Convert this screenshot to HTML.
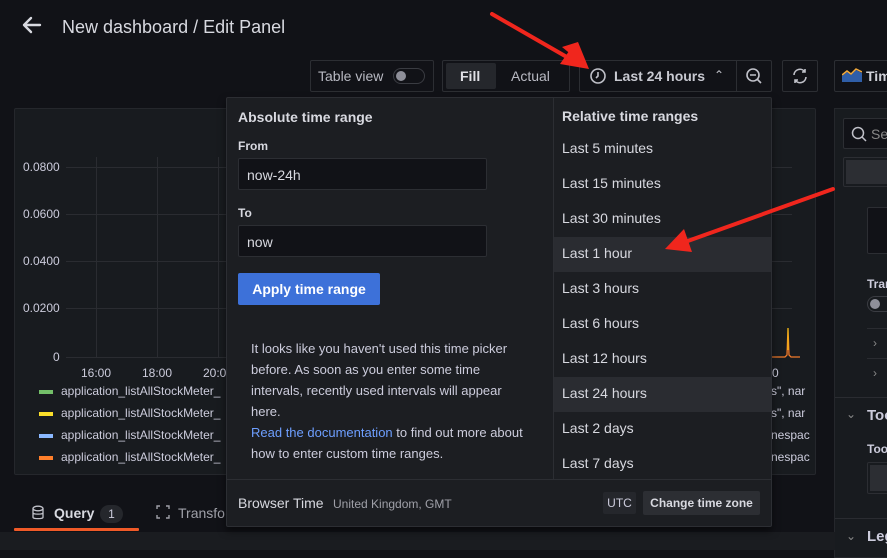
<!DOCTYPE html>
<html><head><style>
*{box-sizing:border-box;margin:0;padding:0}
body{width:887px;height:550px;overflow:hidden;background:#111217;font-family:"Liberation Sans",sans-serif;color:#ccccdc;position:relative}
.a{position:absolute}
.box{position:absolute;border:1px solid #2c2e33;border-radius:2px}
.t{position:absolute;white-space:nowrap}
</style></head><body>
<svg class="a" style="left:22px;top:16px" width="20" height="18" viewBox="0 0 20 18"><path d="M9 2 L2 9 L9 16 M2 9 H18" stroke="#d8d9e0" stroke-width="2.4" fill="none" stroke-linecap="round" stroke-linejoin="round"/></svg>
<div class="t" style="left:62px;top:17px;font-size:18px;color:#d8d9e0">New dashboard / Edit Panel</div>

<div class="box" style="left:310px;top:60px;width:124px;height:32px"></div>
<div class="t" style="left:318px;top:68px;font-size:14px;color:#b8b9c2">Table view</div>
<div class="a" style="left:393px;top:68px;width:32px;height:16px;border:1px solid #3a3c42;border-radius:8px"></div>
<div class="a" style="left:396px;top:71px;width:10px;height:10px;border-radius:50%;background:#8e8f99"></div>

<div class="box" style="left:442px;top:60px;width:128px;height:32px"></div>
<div class="a" style="left:446px;top:63px;width:50px;height:26px;background:#25272c;border-radius:2px"></div>
<div class="t" style="left:460px;top:68px;font-size:14px;font-weight:bold;color:#e0e0e6">Fill</div>
<div class="t" style="left:511px;top:68px;font-size:14px;color:#b8b9c2">Actual</div>

<div class="box" style="left:579px;top:60px;width:193px;height:32px"></div>
<div class="a" style="left:736px;top:61px;width:1px;height:30px;background:#2c2e33"></div>
<svg class="a" style="left:589px;top:67px" width="18" height="18" viewBox="0 0 18 18"><circle cx="9" cy="9" r="7" stroke="#c0c1c9" stroke-width="1.6" fill="none"/><path d="M9 5V9L7 11" stroke="#c0c1c9" stroke-width="1.6" fill="none"/></svg>
<div class="t" style="left:614px;top:68px;font-size:14px;font-weight:bold;color:#c8c9d1">Last 24 hours</div>
<div class="t" style="left:714px;top:68px;font-size:12px;color:#c0c1c9">&#8963;</div>
<svg class="a" style="left:745px;top:67px" width="18" height="18" viewBox="0 0 18 18"><circle cx="8" cy="8" r="6" stroke="#c0c1c9" stroke-width="1.6" fill="none"/><path d="M5 8H11M12.5 12.5L16 16" stroke="#c0c1c9" stroke-width="1.6"/></svg>
<div class="box" style="left:782px;top:60px;width:36px;height:32px"></div>
<svg class="a" style="left:791px;top:67px" width="18" height="18" viewBox="0 0 18 18"><path d="M3 8A6 6 0 0 1 14 5M15 10A6 6 0 0 1 4 13M14 2V5H11M4 16V13H7" stroke="#c0c1c9" stroke-width="1.6" fill="none"/></svg>
<div class="box" style="left:834px;top:60px;width:60px;height:32px"></div>
<svg class="a" style="left:842px;top:68px" width="20" height="14" viewBox="0 0 20 14"><path d="M0 14V8L5 4L9 7L14 2L20 5V14Z" fill="#2f5ea8"/><path d="M0 7L5 3L9 6L14 1L20 4" stroke="#f2a93b" stroke-width="1.5" fill="none"/></svg>
<div class="t" style="left:866px;top:68px;font-size:14px;font-weight:bold;color:#d0d1d8">Tim</div>

<!-- graph panel -->
<div class="a" style="left:14px;top:108px;width:802px;height:367px;background:#181b1f;border:1px solid #25272c;border-radius:2px"></div>
<div class="a" style="left:66px;top:167px;width:160px;height:1px;background:#2a2c31"></div>
<div class="a" style="left:66px;top:214px;width:160px;height:1px;background:#2a2c31"></div>
<div class="a" style="left:66px;top:261px;width:160px;height:1px;background:#2a2c31"></div>
<div class="a" style="left:66px;top:308px;width:160px;height:1px;background:#2a2c31"></div>
<div class="a" style="left:66px;top:357px;width:160px;height:1px;background:#2a2c31"></div>
<div class="a" style="left:96px;top:157px;width:1px;height:200px;background:#2a2c31"></div>
<div class="a" style="left:157px;top:157px;width:1px;height:200px;background:#2a2c31"></div>
<div class="a" style="left:218px;top:157px;width:1px;height:200px;background:#2a2c31"></div>
<div class="a" style="left:772px;top:167px;width:20px;height:1px;background:#2a2c31"></div>
<div class="a" style="left:772px;top:214px;width:20px;height:1px;background:#2a2c31"></div>
<div class="a" style="left:772px;top:261px;width:20px;height:1px;background:#2a2c31"></div>
<div class="a" style="left:772px;top:308px;width:20px;height:1px;background:#2a2c31"></div>
<svg class="a" style="left:772px;top:320px" width="30" height="40"><path d="M0 37H13L15 35L16 8L17 35L19 37H28" stroke="#f07a2a" stroke-width="1.3" fill="none"/><path d="M16 8V30" stroke="#f2cc0c" stroke-width="1"/></svg>
<div class="t" style="left:23px;top:160px;font-size:12px">0.0800</div>
<div class="t" style="left:23px;top:207px;font-size:12px">0.0600</div>
<div class="t" style="left:23px;top:254px;font-size:12px">0.0400</div>
<div class="t" style="left:23px;top:301px;font-size:12px">0.0200</div>
<div class="t" style="left:53px;top:350px;font-size:12px">0</div>
<div class="t" style="left:81px;top:366px;font-size:12px">16:00</div>
<div class="t" style="left:142px;top:366px;font-size:12px">18:00</div>
<div class="t" style="left:203px;top:366px;font-size:12px">20:0</div>
<div class="t" style="left:772px;top:366px;font-size:12px">0</div>
<div class="a" style="left:39px;top:390px;width:14px;height:4px;background:#73bf69"></div>
<div class="a" style="left:39px;top:412px;width:14px;height:4px;background:#fade2a"></div>
<div class="a" style="left:39px;top:434px;width:14px;height:4px;background:#8ab8ff"></div>
<div class="a" style="left:39px;top:456px;width:14px;height:4px;background:#ff7f2a"></div>
<div class="t" style="left:61px;top:384px;font-size:12px">application_listAllStockMeter_</div>
<div class="t" style="left:61px;top:406px;font-size:12px">application_listAllStockMeter_</div>
<div class="t" style="left:61px;top:428px;font-size:12px">application_listAllStockMeter_</div>
<div class="t" style="left:61px;top:450px;font-size:12px">application_listAllStockMeter_</div>
<div class="t" style="left:771px;top:384px;font-size:12px">s", nar</div>
<div class="t" style="left:771px;top:406px;font-size:12px">s", nar</div>
<div class="t" style="left:771px;top:428px;font-size:12px">nespac</div>
<div class="t" style="left:771px;top:450px;font-size:12px">nespac</div>

<!-- right panel -->
<div class="a" style="left:834px;top:108px;width:60px;height:450px;background:#181b1f;border:1px solid #25272c"></div>
<div class="box" style="left:843px;top:118px;width:50px;height:31px;background:#111217"></div>
<svg class="a" style="left:851px;top:126px" width="16" height="16"><circle cx="7" cy="7" r="5.5" stroke="#c0c1c9" stroke-width="1.5" fill="none"/><path d="M11 11L15 15" stroke="#c0c1c9" stroke-width="1.5"/></svg>
<div class="t" style="left:871px;top:126px;font-size:14px;color:#888">Se</div>
<div class="box" style="left:843px;top:157px;width:50px;height:30px"></div>
<div class="a" style="left:846px;top:160px;width:45px;height:24px;background:#2c2e33"></div>
<div class="box" style="left:867px;top:207px;width:30px;height:47px;background:#111217"></div>
<div class="t" style="left:867px;top:277px;font-size:12px;font-weight:bold">Tran</div>
<div class="a" style="left:867px;top:296px;width:30px;height:16px;border:1px solid #3a3c42;border-radius:8px"></div>
<div class="a" style="left:870px;top:299px;width:10px;height:10px;border-radius:50%;background:#8e8f99"></div>
<div class="a" style="left:867px;top:328px;width:30px;height:1px;background:#2a2c31"></div>
<div class="t" style="left:873px;top:336px;font-size:12px;color:#888">&#8250;</div>
<div class="a" style="left:867px;top:358px;width:30px;height:1px;background:#2a2c31"></div>
<div class="t" style="left:873px;top:366px;font-size:12px;color:#888">&#8250;</div>
<div class="a" style="left:835px;top:397px;width:60px;height:1px;background:#2a2c31"></div>
<div class="t" style="left:846px;top:407px;font-size:12px;color:#888">&#8964;</div>
<div class="t" style="left:867px;top:407px;font-size:15px;font-weight:bold">Too</div>
<div class="t" style="left:867px;top:442px;font-size:12px;font-weight:bold">Too</div>
<div class="box" style="left:867px;top:462px;width:30px;height:32px"></div>
<div class="a" style="left:870px;top:465px;width:27px;height:26px;background:#2c2e33"></div>
<div class="a" style="left:835px;top:518px;width:60px;height:1px;background:#2a2c31"></div>
<div class="t" style="left:846px;top:529px;font-size:12px;color:#888">&#8964;</div>
<div class="t" style="left:867px;top:528px;font-size:15px;font-weight:bold">Leg</div>

<!-- query tabs -->
<svg class="a" style="left:31px;top:505px" width="14" height="16"><ellipse cx="7" cy="3.5" rx="5" ry="2.3" stroke="#c0c1c9" stroke-width="1.3" fill="none"/><path d="M2 3.5V12.5C2 14 12 14 12 12.5V3.5M2 8C2 9.5 12 9.5 12 8" stroke="#c0c1c9" stroke-width="1.3" fill="none"/></svg>
<div class="t" style="left:54px;top:505px;font-size:14px;font-weight:bold;color:#d8d9e0">Query</div>
<div class="a" style="left:100px;top:505px;width:23px;height:18px;border-radius:9px;background:#25272c;font-size:12px;text-align:center;line-height:18px">1</div>
<div class="a" style="left:14px;top:528px;width:125px;height:3px;background:#f05a28;border-radius:1px"></div>
<svg class="a" style="left:156px;top:505px" width="14" height="14"><path d="M1 4V1H4M10 1H13V4M13 10V13H10M4 13H1V10" stroke="#9fa0a8" stroke-width="1.4" fill="none"/></svg>
<div class="t" style="left:178px;top:505px;font-size:14px;color:#9fa0a8">Transfo</div>
<div class="a" style="left:0;top:532px;width:835px;height:18px;background:#1a1c20"></div>

<!-- popup -->
<div class="a" style="left:226px;top:97px;width:546px;height:430px;background:#1c1e22;border:1px solid #2c2e33;border-radius:2px;box-shadow:0 4px 8px rgba(0,0,0,.5)"></div>
<div class="a" style="left:553px;top:98px;width:1px;height:381px;background:#2c2e33"></div>
<div class="a" style="left:227px;top:479px;width:544px;height:1px;background:#2c2e33"></div>
<div class="t" style="left:238px;top:109px;font-size:14px;font-weight:bold;color:#d8d9e0">Absolute time range</div>
<div class="t" style="left:238px;top:139px;font-size:12px;font-weight:bold;color:#d8d9e0">From</div>
<div class="box" style="left:238px;top:158px;width:249px;height:32px;background:#111217;border-color:#2c2e33"></div>
<div class="t" style="left:247px;top:167px;font-size:14px;color:#d8d9e0">now-24h</div>
<div class="t" style="left:238px;top:206px;font-size:12px;font-weight:bold;color:#d8d9e0">To</div>
<div class="box" style="left:238px;top:225px;width:249px;height:32px;background:#111217;border-color:#2c2e33"></div>
<div class="t" style="left:247px;top:234px;font-size:14px;color:#d8d9e0">now</div>
<div class="a" style="left:238px;top:273px;width:142px;height:32px;background:#3d71d9;border-radius:2px;color:#fff;font-size:14px;font-weight:bold;text-align:center;line-height:32px">Apply time range</div>
<div class="a" style="left:251px;top:338px;width:280px;font-size:13px;line-height:21px;color:#ccccdc">It looks like you haven't used this time picker before. As soon as you enter some time intervals, recently used intervals will appear here.<br><span style="color:#6e9fff">Read the documentation</span> to find out more about how to enter custom time ranges.</div>

<div class="t" style="left:562px;top:108px;font-size:14px;font-weight:bold;color:#d8d9e0">Relative time ranges</div>
<div class="a" style="left:554px;top:237px;width:217px;height:35px;background:#2a2c31"></div>
<div class="a" style="left:554px;top:377px;width:217px;height:35px;background:#2a2c31"></div>
<div class="t" style="left:562px;top:141px;font-size:14px;line-height:35px;color:#d8d9e0;top:131px">Last 5 minutes<br>Last 15 minutes<br>Last 30 minutes<br>Last 1 hour<br>Last 3 hours<br>Last 6 hours<br>Last 12 hours<br>Last 24 hours<br>Last 2 days<br>Last 7 days</div>

<div class="t" style="left:238px;top:495px;font-size:14px;color:#d8d9e0">Browser Time</div>
<div class="t" style="left:333px;top:497px;font-size:12px;color:#9fa0a8">United Kingdom, GMT</div>
<div class="a" style="left:603px;top:492px;width:33px;height:22px;background:#25272c;border-radius:2px;font-size:12px;text-align:center;line-height:22px">UTC</div>
<div class="a" style="left:643px;top:491px;width:117px;height:24px;background:#2c2e33;border-radius:2px;font-size:12px;font-weight:bold;text-align:center;line-height:24px;color:#d8d9e0">Change time zone</div>

<!-- arrows -->
<svg class="a" style="left:0;top:0" width="887" height="550">
<path d="M492 14L572 60" stroke="#f0261d" stroke-width="4" stroke-linecap="round"/>
<path d="M589 69L562 47L578 42Z" fill="#f0261d" transform="rotate(0)"/>
<path d="M589 69L560 64L574 44Z" fill="#f0261d"/>
<path d="M833 189L685 242" stroke="#f0261d" stroke-width="4" stroke-linecap="round"/>
<path d="M665 249L684 229L692 252Z" fill="#f0261d"/>
</svg>
</body></html>
